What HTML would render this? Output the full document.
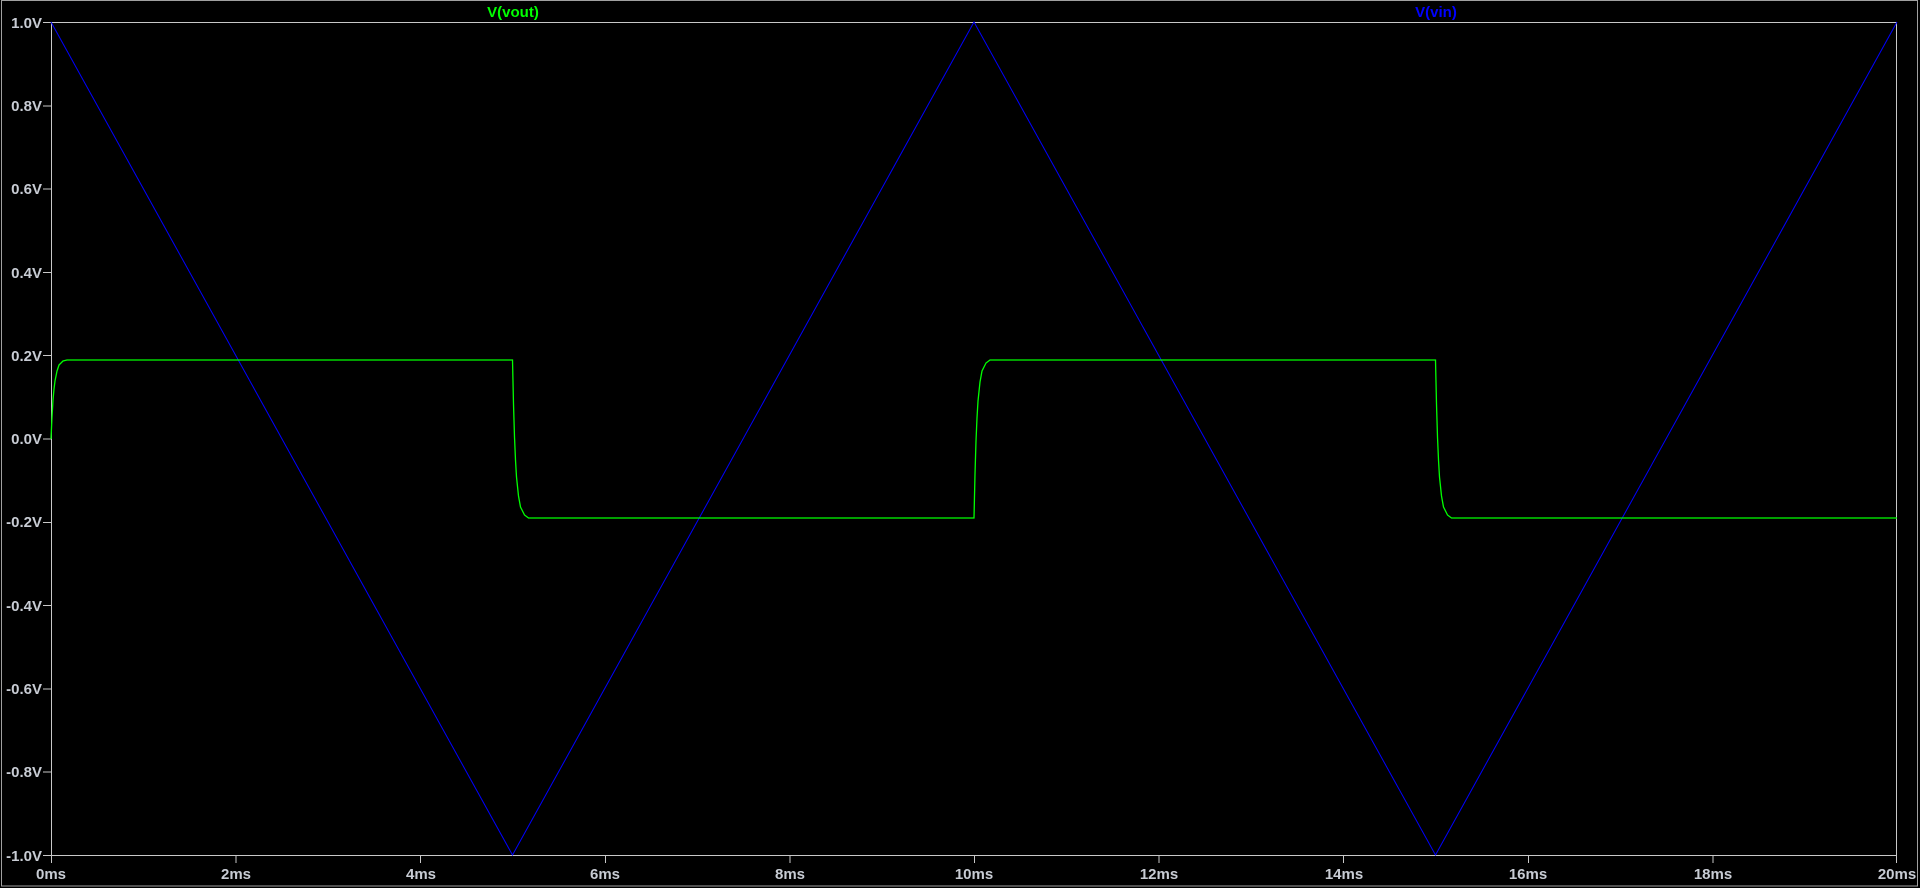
<!DOCTYPE html>
<html><head><style>
html,body{margin:0;padding:0;background:#000;width:1920px;height:888px;overflow:hidden}
svg{display:block}
text{font-family:"Liberation Sans",Arial,sans-serif;font-weight:bold;font-size:15px;fill:#c8ccd4}
</style></head><body>
<svg width="1920" height="888" viewBox="0 0 1920 888">
<rect x="0" y="0" width="1920" height="888" fill="#000"/>
<rect x="1.5" y="0.5" width="1916" height="885.5" fill="none" stroke="#a0a0a0" stroke-width="1"/>
<g stroke="#c8c8c8" stroke-width="1" fill="none" shape-rendering="crispEdges">
<rect x="51.5" y="22.5" width="1845" height="833"/>
<!-- y ticks -->
<path d="M43 22.5H51M43 105.8H51M43 189.1H51M43 272.4H51M43 355.7H51M43 439H51M43 522.3H51M43 605.6H51M43 688.9H51M43 772.2H51M43 855.5H51"/>
<!-- x ticks -->
<path d="M51.5 855V863M236.1 855V863M420.7 855V863M605.3 855V863M789.9 855V863M974.5 855V863M1159.1 855V863M1343.7 855V863M1528.3 855V863M1712.9 855V863M1896.5 855V863"/>
</g>
<g text-anchor="end">
<text x="42" y="28">1.0V</text>
<text x="42" y="111">0.8V</text>
<text x="42" y="194">0.6V</text>
<text x="42" y="278">0.4V</text>
<text x="42" y="361">0.2V</text>
<text x="42" y="444">0.0V</text>
<text x="42" y="527">-0.2V</text>
<text x="42" y="611">-0.4V</text>
<text x="42" y="694">-0.6V</text>
<text x="42" y="777">-0.8V</text>
<text x="42" y="861">-1.0V</text>
</g>
<g text-anchor="middle">
<text x="51" y="879">0ms</text>
<text x="236" y="879">2ms</text>
<text x="421" y="879">4ms</text>
<text x="605" y="879">6ms</text>
<text x="790" y="879">8ms</text>
<text x="974" y="879">10ms</text>
<text x="1159" y="879">12ms</text>
<text x="1344" y="879">14ms</text>
<text x="1528" y="879">16ms</text>
<text x="1713" y="879">18ms</text>
<text x="1897" y="879">20ms</text>
<text x="513" y="17" style="fill:#00ff00">V(vout)</text>
<text x="1436" y="17" style="fill:#0000ff">V(vin)</text>
</g>
<polyline fill="none" stroke="#0000ff" stroke-width="1" points="51,22 512.5,855 974,22 1435.5,855 1897,22"/>
<polyline fill="none" stroke="#00ff00" stroke-width="1.3" points="
51,439 52,417 53,400 54,389 55,381 57,371 59,365 63,361 67,360
512.5,360 513.5,404 514.5,437 515.5,460 516.5,477 518.5,496 520.5,507 524.5,515 528.5,518
974,518 975,474 976,441 977,418 978,401 980,382 982,371 986,363 990,360
1435.5,360 1436.5,404 1437.5,437 1438.5,460 1439.5,477 1441.5,496 1443.5,507 1447.5,515 1451.5,518
1897,518"/>
</svg>
</body></html>
